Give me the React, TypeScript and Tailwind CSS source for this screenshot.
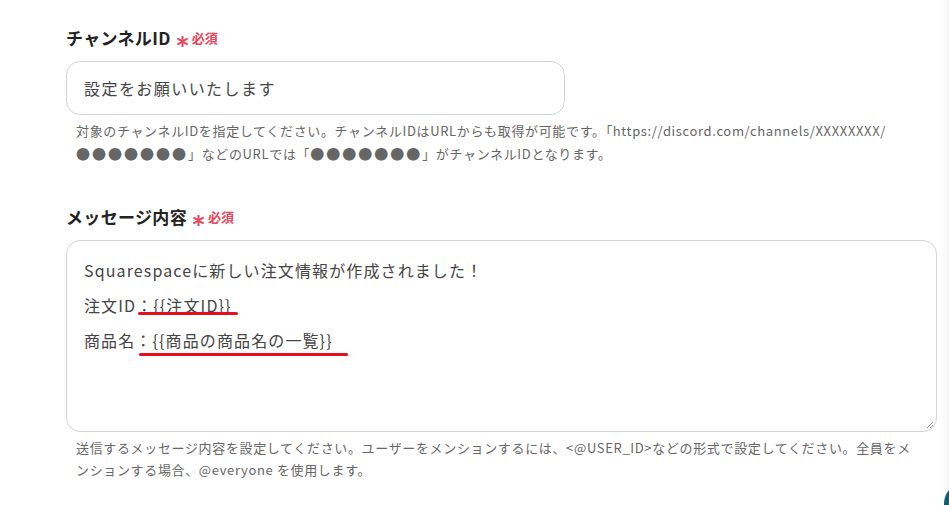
import React from 'react';

const font = { fontFamily: '"Noto Sans CJK JP", "Noto Sans", sans-serif' };

const Required = () => (
  <span className="ml-[6px] inline-flex items-center gap-[4px] text-[13px] font-bold text-[#e8445a]">
    <svg className="translate-y-[3px]" width="11" height="11" viewBox="0 0 12 12">
      <path d="M6 0.5 V11.5 M1.2 3.2 L10.8 8.8 M1.2 8.8 L10.8 3.2" stroke="#e8445a" strokeWidth="2.2" strokeLinecap="round" />
    </svg>
    必須
  </span>
);

const Dots = () => <span className="text-[14px] tracking-[2px]">●●●●●●●</span>;

const App: React.FC = () => {
  return (
    <div className="relative h-[505px] w-[949px] overflow-hidden bg-white text-[#333]" style={font}>
      <div className="pl-[66px] pt-[24px]">
        {/* チャンネルID */}
        <div className="flex h-[28px] items-center">
          <span className="text-[17px] font-bold tracking-[0.02em] text-[#222]">チャンネルID</span>
          <Required />
        </div>
        <div className="mt-[9px] flex h-[54px] w-[499px] items-center rounded-[14px] border border-[#d3d3dc] px-[17px] text-[16px] tracking-[0.09em] text-[#444]">
          設定をお願いいたします
        </div>
        <p className="mt-[5px] pl-[10px] text-[13px] leading-[22px] tracking-[0.05em] text-[#666]">
          対象のチャンネルIDを指定してください。チャンネルIDはURLからも取得が可能です。「https://discord.com/channels/XXXXXXXX/
          <br />
          <Dots />」などのURLでは「<Dots />」がチャンネルIDとなります。
        </p>

        {/* メッセージ内容 */}
        <div className="mt-[38px] flex h-[28px] items-center">
          <span className="text-[17px] font-bold tracking-[0.02em] text-[#222]">メッセージ内容</span>
          <Required />
        </div>
        <div className="relative mt-[9px] h-[192px] w-[871px] rounded-[14px] border border-[#d3d3dc] px-[17px] pt-[12px] text-[16px] leading-[35px] tracking-[0.07em] text-[#444]">
          <div>Squarespaceに新しい注文情報が作成されました！</div>
          <div>注文ID：{'{{注文ID}}'}</div>
          <div>商品名：{'{{商品の商品名の一覧}}'}</div>
          <span className="absolute left-[71px] top-[71px] h-[3px] w-[100px] rounded-full bg-[#e60f1e]" />
          <span className="absolute left-[72px] top-[112px] h-[3px] w-[209px] rounded-full bg-[#e60f1e]" />
          <svg className="absolute bottom-[2px] right-[2px]" width="9" height="9" viewBox="0 0 9 9">
            <path d="M8 2 L2 8 M8 5 L5 8" stroke="#999" strokeWidth="1" />
          </svg>
        </div>
        <p className="mt-[5px] pl-[10px] text-[13px] leading-[22px] tracking-[0.05em] text-[#666]">
          送信するメッセージ内容を設定してください。ユーザーをメンションするには、&lt;@USER_ID&gt;などの形式で設定してください。全員をメ
          <br />
          ンションする場合、@everyone を使用します。
        </p>
      </div>
      <div className="absolute right-0 top-0 h-full w-[8px] bg-gradient-to-r from-white to-[#f3f3f5]" />
      <div className="absolute left-[944px] top-[482px] h-[44px] w-[44px] rounded-full bg-[#0f5f73]" />
    </div>
  );
};

export default App;
